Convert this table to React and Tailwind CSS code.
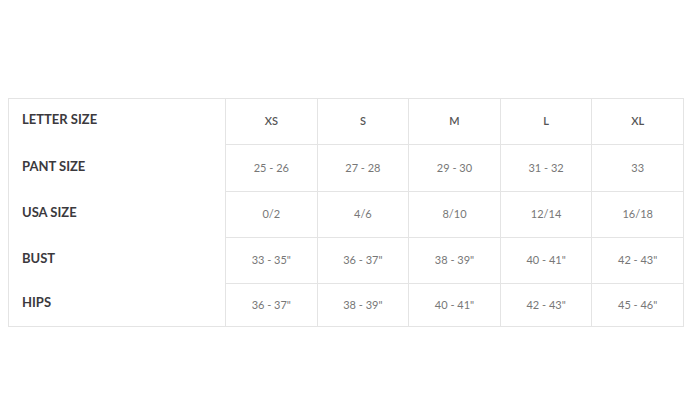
import React from "react";

const rows = [
  { label: "LETTER SIZE", values: ["XS", "S", "M", "L", "XL"], head: true, h: "h-[46px]" },
  { label: "PANT SIZE", values: ["25 - 26", "27 - 28", "29 - 30", "31 - 32", "33"], h: "h-[47px]" },
  { label: "USA SIZE", values: ["0/2", "4/6", "8/10", "12/14", "16/18"], h: "h-[46px]" },
  { label: "BUST", values: ["33 - 35\"", "36 - 37\"", "38 - 39\"", "40 - 41\"", "42 - 43\""], h: "h-[46px]" },
  { label: "HIPS", values: ["36 - 37\"", "38 - 39\"", "40 - 41\"", "42 - 43\"", "45 - 46\""], h: "h-[42px]", last: true },
];

export default function App() {
  return (
    <div className="w-[700px] h-[420px] bg-white pt-[98px] pl-[8px]" style={{ fontFamily: "Lato, 'Open Sans', sans-serif" }}>
      <div className="w-[676px] border border-[#e4e4e4] grid grid-cols-[216px_repeat(5,1fr)]">
        {rows.map((r, i) => (
          <React.Fragment key={i}>
            <div className={`${r.h} flex items-center pl-[13px] pb-[4px] text-[13px] font-bold text-[#3b393d]`}>
              {r.label}
            </div>
            {r.values.map((v, j) => (
              <div
                key={j}
                className={`${r.h} flex items-center justify-center border-l border-[#e4e4e4] ${r.last ? "" : "border-b"} text-[11px] ${r.head ? "font-semibold text-[#555]" : "text-[#777]"}`}
              >
                {v}
              </div>
            ))}
          </React.Fragment>
        ))}
      </div>
    </div>
  );
}
